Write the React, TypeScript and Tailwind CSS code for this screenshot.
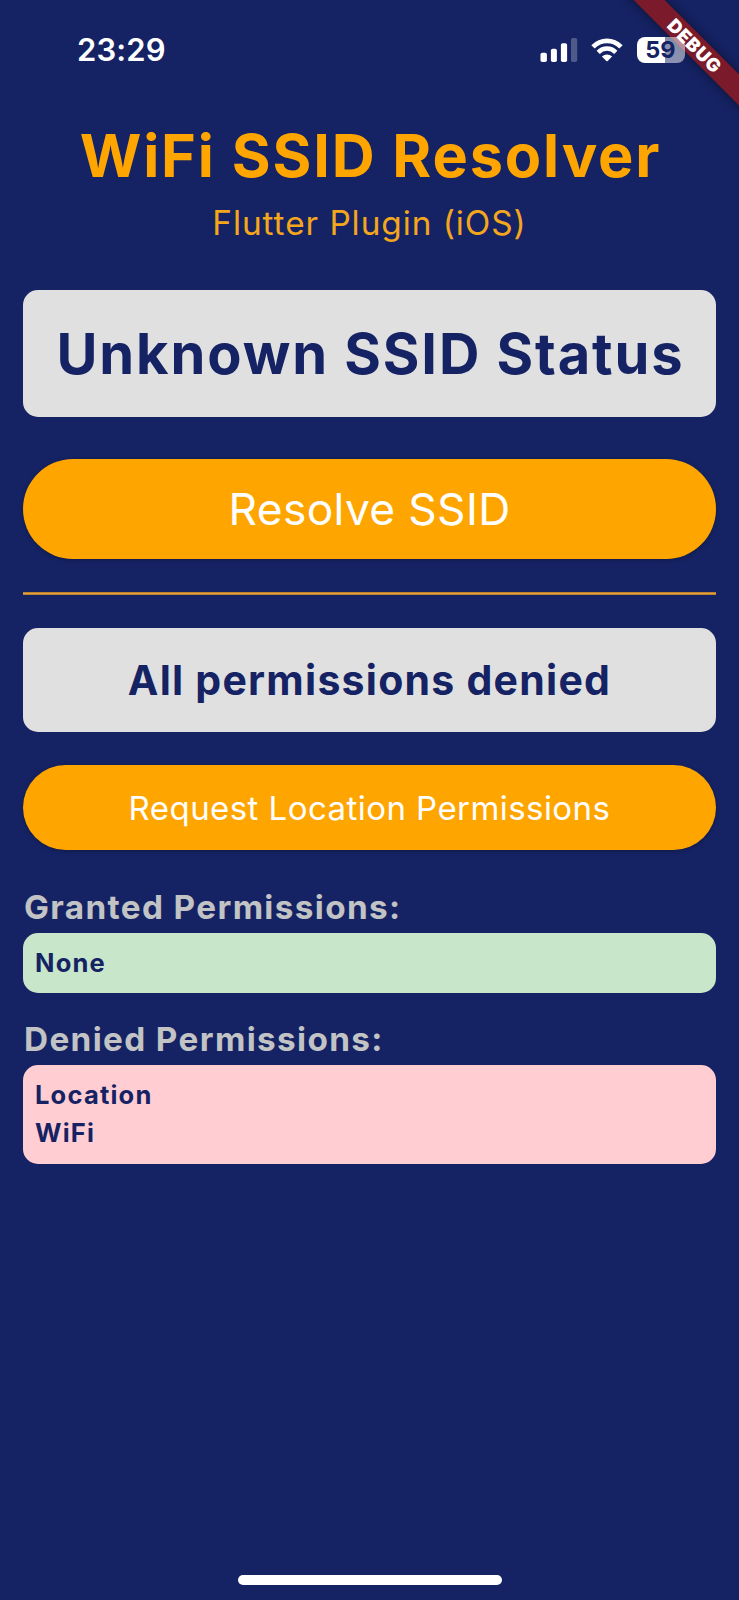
import React from "react";

function SignalIcon() {
  return (
    <svg width="38" height="26" viewBox="0 0 38 26" fill="#fff" className="block">
      <rect x="0.5" y="15.8" width="6.4" height="9.2" rx="1.8" />
      <rect x="10.9" y="11.8" width="6" height="13.2" rx="1.8" />
      <rect x="20.9" y="6.2" width="6.2" height="18.8" rx="1.8" />
      <rect x="31" y="1" width="6.2" height="24" rx="1.8" opacity="0.25" />
    </svg>
  );
}

function WifiIcon() {
  return (
    <svg width="32" height="24" viewBox="0 0 32 24" fill="none" className="block">
      <path d="M2 8.9 C9.9 0.9 22.1 0.9 30 8.9" stroke="#fff" strokeWidth="4.7" />
      <path d="M7.2 14.3 C12.2 9.3 19.8 9.3 24.8 14.3" stroke="#fff" strokeWidth="4.5" />
      <path d="M10.9 18.4 C13.8 15.7 18.2 15.7 21.1 18.4 L16.7 22.9 Q16 23.5 15.3 22.9 Z" fill="#fff" />
    </svg>
  );
}

function Battery() {
  return (
    <div className="flex h-[26px] w-12 items-center justify-center rounded-[8px] bg-[linear-gradient(to_right,#fff_58%,rgba(255,255,255,0.5)_58%)] pr-px">
      <span className="text-[23.5px] leading-[26px] font-bold text-[#152364]">59</span>
    </div>
  );
}

function StatusBar() {
  return (
    <div className="relative z-10 flex h-[98px] items-center justify-between pt-px pr-[54px] pl-[77px] text-white">
      <span className="pt-px text-[31px] leading-[38px] font-semibold tracking-[0.1px]">23:29</span>
      <div className="flex items-center">
        <SignalIcon />
        <div className="ml-[13px]">
          <WifiIcon />
        </div>
        <div className="ml-[14px]">
          <Battery />
        </div>
      </div>
    </div>
  );
}

function DebugBanner() {
  return (
    <div className="absolute top-0 right-0 size-[130px] overflow-hidden">
      <div className="absolute top-[34.2px] left-[-15.4px] flex h-[22.4px] w-[200px] rotate-45 items-center justify-center bg-[#7b1a2a] pl-[2px] shadow-[0_0_11px_rgba(0,0,0,0.5)]">
        <span className="text-[18.5px] leading-[22px] font-black tracking-[0.7px] text-white">DEBUG</span>
      </div>
    </div>
  );
}

function PermissionList({ title, items, className }: { title: string; items: string[]; className: string }) {
  return (
    <section className="flex flex-col">
      <h2 className="flex h-[50px] items-center pl-px text-[33.3px] font-bold tracking-[1.36px] text-[#c1c3c5]">{title}</h2>
      <ul className={"flex flex-col justify-center rounded-[15px] px-3 text-[25.5px] leading-[38px] font-bold tracking-[1.2px] text-[#152364] " + className}>
        {items.map((item) => (
          <li key={item}>{item}</li>
        ))}
      </ul>
    </section>
  );
}

export default function App() {
  return (
    <div className="relative flex h-[1600px] w-[739px] flex-col overflow-hidden bg-[#152364] font-['Inter',sans-serif]">
      <DebugBanner />
      <StatusBar />
      <main className="flex flex-1 flex-col px-[23px] text-center">
        <h1 className="mt-[21px] pl-[2px] text-[59.4px] leading-[72px] font-bold tracking-[1.85px] whitespace-nowrap text-[#ffa500]">WiFi SSID Resolver</h1>
        <p className="mt-[12px] text-[33.3px] leading-[40px] tracking-[0.97px] text-[#f4a61c]">Flutter Plugin (iOS)</p>
        <div className="mt-[47px] flex h-[127px] items-center justify-center rounded-[15px] bg-[#e0e0e0] pl-[2px] text-[56px] font-bold tracking-[1.9px] whitespace-nowrap text-[#152364]">
          Unknown SSID Status
        </div>
        <button className="mt-[42px] flex h-[100px] items-center justify-center rounded-full bg-[#ffa500] text-[44.3px] tracking-[0.37px] text-white shadow-[0_1px_4px_rgba(0,0,0,0.3)]">
          Resolve SSID
        </button>
        <hr className="mt-[33px] h-[3px] border-0 bg-[linear-gradient(#a5732c,#e5a03a,#a5732c)]" />
        <div className="mt-[32.5px] flex h-[104.5px] items-center justify-center rounded-[15px] bg-[#e0e0e0] pt-[2px] text-[41px] font-bold tracking-[1.25px] text-[#152364]">
          All permissions denied
        </div>
        <button className="mt-[33px] flex h-[85px] items-center justify-center rounded-full bg-[#ffa500] pt-[2px] text-[33px] tracking-[0.44px] text-white shadow-[0_1px_4px_rgba(0,0,0,0.3)]">
          Request Location Permissions
        </button>
        <div className="mt-[32.5px] flex flex-col gap-[22px] text-left">
          <PermissionList title="Granted Permissions:" items={["None"]} className="h-[60.5px] bg-[#c8e6c9]" />
          <PermissionList title="Denied Permissions:" items={["Location", "WiFi"]} className="h-[98.5px] bg-[#ffcdd2]" />
        </div>
      </main>
      <div className="mb-[15px] h-[10px] w-[264px] self-center rounded-full bg-white" />
    </div>
  );
}
